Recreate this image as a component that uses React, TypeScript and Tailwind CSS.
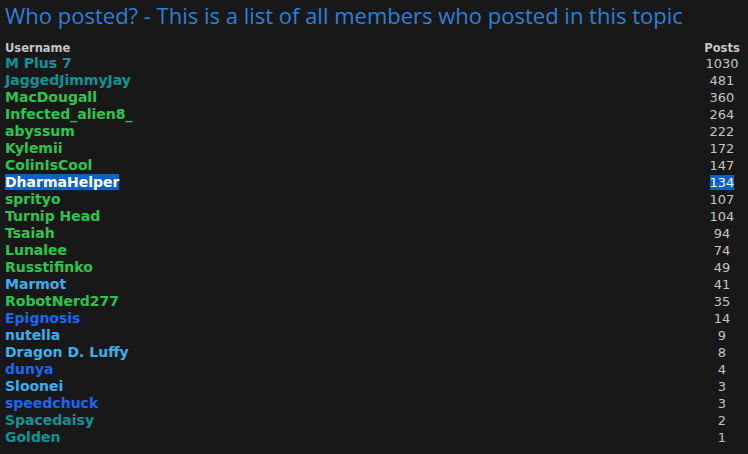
import React from "react";

type Poster = { name: string; posts: number; color: string; selected?: boolean };

const TEAL = "text-[#0e9494]";
const GREEN = "text-[#2ec54f]";
const SKY = "text-[#3daef0]";
const BLUE = "text-[#1b66f5]";

const posters: Poster[] = [
  { name: "M Plus 7", posts: 1030, color: TEAL },
  { name: "JaggedJimmyJay", posts: 481, color: TEAL },
  { name: "MacDougall", posts: 360, color: GREEN },
  { name: "Infected_alien8_", posts: 264, color: GREEN },
  { name: "abyssum", posts: 222, color: GREEN },
  { name: "Kylemii", posts: 172, color: GREEN },
  { name: "ColinIsCool", posts: 147, color: GREEN },
  { name: "DharmaHelper", posts: 134, color: GREEN, selected: true },
  { name: "sprityo", posts: 107, color: GREEN },
  { name: "Turnip Head", posts: 104, color: GREEN },
  { name: "Tsaiah", posts: 94, color: GREEN },
  { name: "Lunalee", posts: 74, color: GREEN },
  { name: "Russtifinko", posts: 49, color: GREEN },
  { name: "Marmot", posts: 41, color: SKY },
  { name: "RobotNerd277", posts: 35, color: GREEN },
  { name: "Epignosis", posts: 14, color: BLUE },
  { name: "nutella", posts: 9, color: SKY },
  { name: "Dragon D. Luffy", posts: 8, color: SKY },
  { name: "dunya", posts: 4, color: BLUE },
  { name: "Sloonei", posts: 3, color: SKY },
  { name: "speedchuck", posts: 3, color: BLUE },
  { name: "Spacedaisy", posts: 2, color: TEAL },
  { name: "Golden", posts: 1, color: TEAL },
];

function PosterRow({ poster }: { poster: Poster }) {
  return (
    <tr className="h-[17px]">
      <td className="p-0 text-[14px] leading-[17px]">
        <span
          className={
            poster.selected
              ? "bg-[#0a62c8] text-white font-bold"
              : poster.color + " font-bold"
          }
        >
          {poster.name}
        </span>
      </td>
      <td className="w-[38px] p-0 text-center text-[13px] leading-[17px] text-[#c4c4c4]">
        <span className={poster.selected ? "bg-[#0a62c8] text-white" : ""}>
          {poster.posts}
        </span>
      </td>
    </tr>
  );
}

export default function App() {
  return (
    <div className="h-[454px] w-[748px] overflow-hidden bg-[#181818] pl-[5px] pr-[7px] font-['DejaVu_Sans',Verdana,sans-serif]">
      <h1 className="font-['Open_Sans',sans-serif] text-[22px] leading-[30px] text-[#2f7fd8]">
        Who posted? - This is a list of all members who posted in this topic
      </h1>
      <table className="mt-[11px] w-full border-collapse">
        <thead>
          <tr className="h-[14px] text-[11.5px] font-bold text-[#c4c4c4]">
            <th className="p-0 text-left leading-[14px]">Username</th>
            <th className="p-0 text-center leading-[14px]">Posts</th>
          </tr>
        </thead>
        <tbody>
          {posters.map((p) => (
            <PosterRow poster={p} key={p.name} />
          ))}
        </tbody>
      </table>
    </div>
  );
}
